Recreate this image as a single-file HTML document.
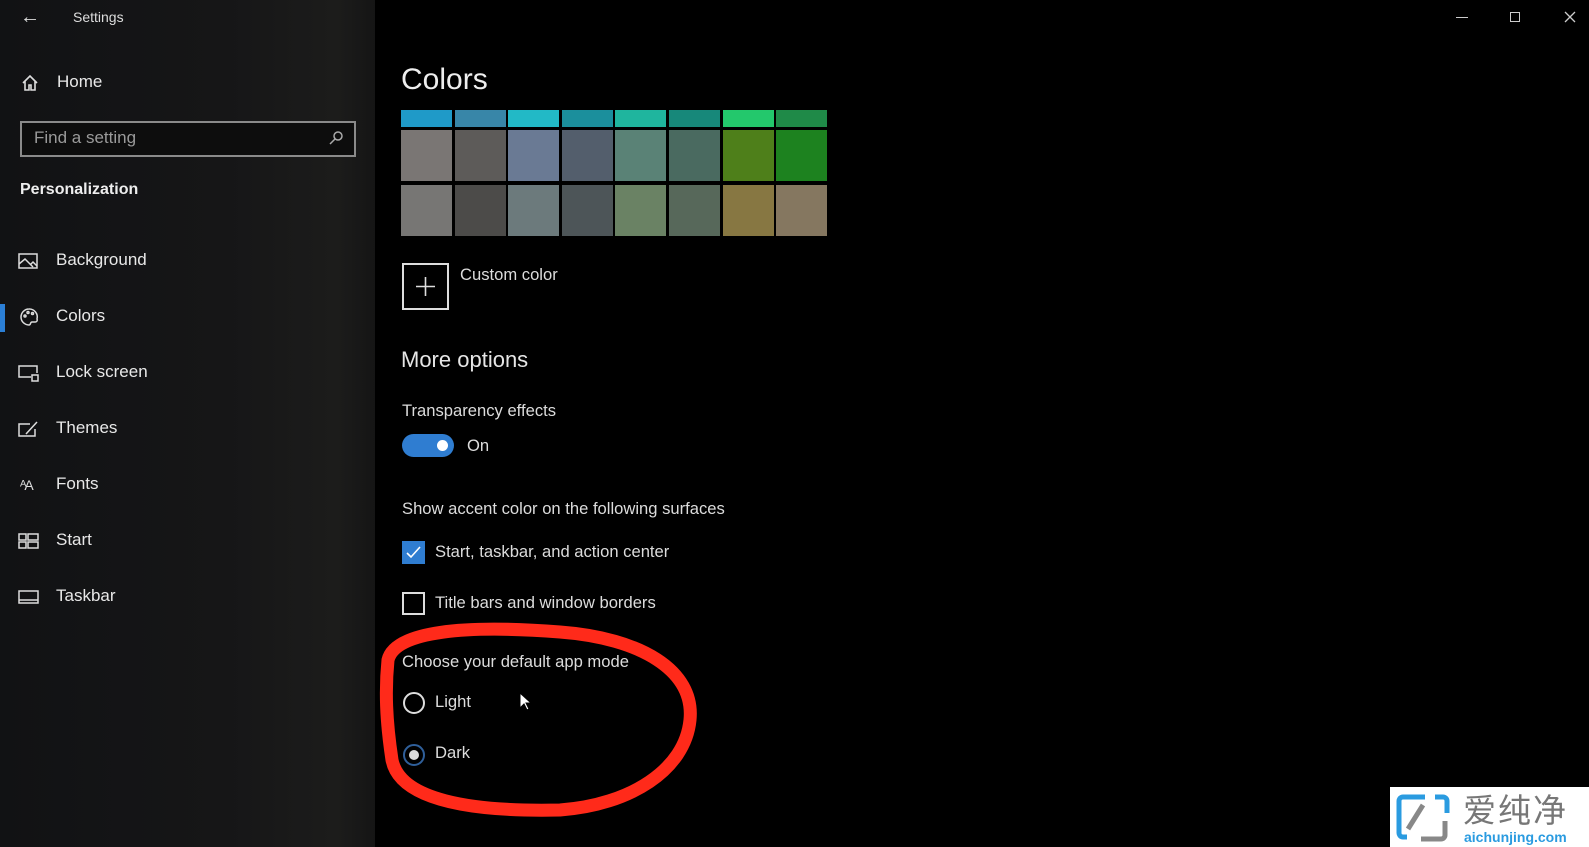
<!DOCTYPE html>
<html><head><meta charset="utf-8"><style>
*{margin:0;padding:0;box-sizing:border-box}
body{width:1589px;height:847px;background:#000;position:relative;overflow:hidden;font-family:"Segoe UI","Liberation Sans",sans-serif;color:#e6e6e6}
.a{position:absolute;white-space:nowrap}
#side{position:absolute;left:0;top:0;width:375px;height:847px;background:linear-gradient(90deg,#111214 0%,#161617 60%,#1c1c1b 90%,#151515 100%)}
.nav{font-size:17px;color:#e8e8e8}
.sw{position:absolute;width:51px}
.t{font-size:16.6px;color:#dcdcdc}
</style></head><body>
<div id="side">
 <div class="a" style="left:20px;top:6px;font-size:20px;color:#ddd">&#8592;</div>
 <div class="a" style="left:73px;top:9px;font-size:14px;color:#ddd">Settings</div>
 <svg class="a" style="left:21px;top:74px" width="18" height="18" viewBox="0 0 18 18" fill="none" stroke="#ddd" stroke-width="1.6"><path d="M2 9L9 2l7 7M4 7v9h4v-5h2v5h4V7"/></svg>
 <div class="a nav" style="left:57px;top:72px">Home</div>
 <div class="a" style="left:20px;top:121px;width:336px;height:36px;border:2px solid #8a8a8a;background:#0d0d0d"></div>
 <div class="a" style="left:34px;top:128px;font-size:17px;color:#9a9a9a">Find a setting</div>
 <svg class="a" style="left:328px;top:130px" width="16" height="16" viewBox="0 0 16 16" fill="none" stroke="#aaa" stroke-width="1.5"><circle cx="10" cy="6" r="4"/><path d="M7 9l-5 5"/></svg>
 <div class="a" style="left:20px;top:181px;font-size:16px;font-weight:bold;color:#eee">Personalization</div>
 <div class="a" style="left:0;top:304px;width:5px;height:28px;background:#2b7fd6"></div>
 <svg class="a" style="left:18px;top:252px" width="20" height="18" viewBox="0 0 20 18" fill="none" stroke="#ddd" stroke-width="1.5"><rect x="1" y="2" width="18" height="14"/><path d="M1 12l6-5 8 8M12 13l3-3 4 4"/></svg>
 <div class="a nav" style="left:56px;top:250px">Background</div>
 <svg class="a" style="left:19px;top:307px" width="20" height="20" viewBox="0 0 20 20" fill="none" stroke="#ddd" stroke-width="1.5"><path d="M10 2a8 8 0 1 0 0 16c2 0 1-3 3-3h3a2 2 0 0 0 2-3 8 8 0 0 0-8-10z"/><circle cx="6" cy="9" r="1"/><circle cx="9" cy="5.5" r="1"/><circle cx="13.5" cy="6.5" r="1"/></svg>
 <div class="a nav" style="left:56px;top:306px">Colors</div>
 <svg class="a" style="left:18px;top:364px" width="21" height="18" viewBox="0 0 21 18" fill="none" stroke="#ddd" stroke-width="1.5"><path d="M13 13H1V2h18v7"/><rect x="14" y="11" width="6" height="6"/></svg>
 <div class="a nav" style="left:56px;top:362px">Lock screen</div>
 <svg class="a" style="left:18px;top:420px" width="21" height="18" viewBox="0 0 21 18" fill="none" stroke="#ddd" stroke-width="1.5"><path d="M12 4H1v12h16V9M8 14l11-12"/></svg>
 <div class="a nav" style="left:56px;top:418px">Themes</div>
 <div class="a" style="left:20px;top:477px;font-size:14px;color:#ddd;letter-spacing:-2px">ᴬA</div>
 <div class="a nav" style="left:56px;top:474px">Fonts</div>
 <svg class="a" style="left:18px;top:533px" width="21" height="16" viewBox="0 0 21 16" fill="none" stroke="#ddd" stroke-width="1.5"><rect x="1" y="1" width="7" height="6"/><rect x="10" y="1" width="10" height="6"/><rect x="1" y="9" width="7" height="6"/><rect x="10" y="9" width="10" height="6"/></svg>
 <div class="a nav" style="left:56px;top:530px">Start</div>
 <svg class="a" style="left:18px;top:590px" width="21" height="14" viewBox="0 0 21 14" fill="none" stroke="#ddd" stroke-width="1.5"><rect x="1" y="1" width="19" height="12"/><path d="M1 10h19"/></svg>
 <div class="a nav" style="left:56px;top:586px">Taskbar</div>
</div>
<div class="a" style="left:1456px;top:17px;width:12px;height:1px;background:#ccc"></div>
<div class="a" style="left:1510px;top:12px;width:10px;height:10px;border:1px solid #ccc"></div>
<svg class="a" style="left:1564px;top:11px" width="12" height="12" viewBox="0 0 12 12" stroke="#ccc" stroke-width="1.3"><path d="M1 1l10 10M11 1L1 11"/></svg>
<div class="a" style="left:401px;top:63px;font-size:30px;color:#eee">Colors</div>
<div id="sw"></div>
<div class="a" style="left:402px;top:263px;width:47px;height:47px;border:2px solid #ddd"></div>
<svg class="a" style="left:415px;top:276px" width="21" height="21" viewBox="0 0 21 21" stroke="#ddd" stroke-width="1.6"><path d="M10.5 1v19M1 10.5h19"/></svg>
<div class="a t" style="left:460px;top:265px">Custom color</div>
<div class="a" style="left:401px;top:347px;font-size:22px;color:#e6e6e6">More options</div>
<div class="a t" style="left:402px;top:401px">Transparency effects</div>
<div class="a" style="left:402px;top:434px;width:52px;height:23px;border-radius:12px;background:#2f7dd1"></div>
<div class="a" style="left:437px;top:440px;width:11px;height:11px;border-radius:50%;background:#fff"></div>
<div class="a t" style="left:467px;top:436px">On</div>
<div class="a t" style="left:402px;top:499px">Show accent color on the following surfaces</div>
<div class="a" style="left:402px;top:541px;width:23px;height:23px;background:#2f7dd1"></div>
<svg class="a" style="left:404px;top:543px" width="19" height="19" viewBox="0 0 19 19" fill="none" stroke="#fff" stroke-width="1.6"><path d="M3 10l4 4 9-10"/></svg>
<div class="a t" style="left:435px;top:542px">Start, taskbar, and action center</div>
<div class="a" style="left:402px;top:592px;width:23px;height:23px;border:2px solid #ddd"></div>
<div class="a t" style="left:435px;top:593px">Title bars and window borders</div>
<div class="a t" style="left:402px;top:652px">Choose your default app mode</div>
<div class="a" style="left:403px;top:692px;width:22px;height:22px;border-radius:50%;border:2px solid #ddd"></div>
<div class="a t" style="left:435px;top:692px">Light</div>
<div class="a" style="left:403px;top:744px;width:22px;height:22px;border-radius:50%;border:2px solid #2f5f9a"></div>
<div class="a" style="left:409px;top:750px;width:10px;height:10px;border-radius:50%;background:#ddd"></div>
<div class="a t" style="left:435px;top:743px">Dark</div>
<svg class="a" style="left:519px;top:692px" width="14" height="20" viewBox="0 0 14 20"><path d="M1 1v15l4-4 3 6 2-1-3-6h5z" fill="#fff" stroke="#000" stroke-width="1"/></svg>
<svg class="a" style="left:0;top:0" width="1589" height="847"><path d="M388 660C395 630 470 625 560 632C640 638 695 670 690 720C685 770 630 805 560 810C470 812 400 800 392 760C386 720 385 690 388 660Z" fill="none" stroke="#ff2a1a" stroke-width="13"/></svg>
<div class="a" style="left:1390px;top:787px;width:199px;height:60px;background:#fff"></div>
<svg class="a" style="left:1395px;top:793px" width="55" height="50" viewBox="0 0 55 50" fill="none" stroke-width="5"><path d="M30 4H8a4 4 0 0 0-4 4v32a4 4 0 0 0 4 4h4M40 4h8a4 4 0 0 1 4 4v12" stroke="#2a9be0"/><path d="M13 36L28 12" stroke="#888"/><path d="M50 28v14a4 4 0 0 1-4 4H26" stroke="#888"/></svg>
<div class="a" style="left:1463px;top:790px;font-size:33px;color:#777;font-family:'Noto Sans CJK SC',sans-serif;line-height:36px;letter-spacing:2px">爱纯净</div>
<div class="a" style="left:1464px;top:829px;font-size:14px;font-weight:bold;color:#2a9be0">aichunjing.com</div>
<script>
var c=[["#1f9ac8","#3886a8","#22b9c6","#1b8f9c","#1fb59e","#17887a","#23c86c","#1f8a48"],
["#7a7674","#5d5b59","#6a7a94","#535e6c","#5a8276","#4a6a60","#4e7f1a","#1d821f"],
["#777674","#4c4b49","#6c7a7c","#4d5558","#6a8264","#57685a","#877742","#857760"]];
var h="",ys=[110,130,185],hs=[17,51,51];
for(var r=0;r<3;r++)for(var i=0;i<8;i++)h+='<div class="sw" style="left:'+(401+i*53.6)+'px;top:'+ys[r]+'px;height:'+hs[r]+'px;background:'+c[r][i]+'"></div>';
document.getElementById("sw").innerHTML=h;
</script>
</body></html>
